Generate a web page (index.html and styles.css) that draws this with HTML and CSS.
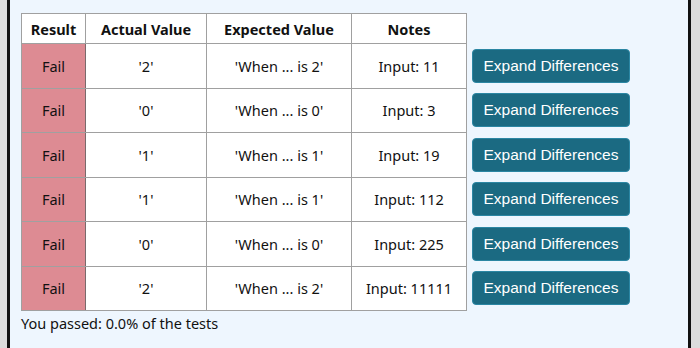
FILE: index.html
```html
<!DOCTYPE html>
<html>
<head>
<meta charset="utf-8">
<link rel="stylesheet" href="styles.css">
</head>
<body>
<div class="frame">
  <table class="results">
    <colgroup>
      <col class="c-result"><col class="c-actual"><col class="c-expected"><col class="c-notes"><col class="c-btn">
    </colgroup>
    <thead>
      <tr><th>Result</th><th>Actual Value</th><th>Expected Value</th><th>Notes</th><th class="btn-cell"></th></tr>
    </thead>
    <tbody>
      <tr><td class="fail">Fail</td><td>'2'</td><td>'When ... is 2'</td><td>Input: 11</td><td class="btn-cell"><button class="btn">Expand Differences</button></td></tr>
      <tr><td class="fail">Fail</td><td>'0'</td><td>'When ... is 0'</td><td>Input: 3</td><td class="btn-cell"><button class="btn">Expand Differences</button></td></tr>
      <tr><td class="fail">Fail</td><td>'1'</td><td>'When ... is 1'</td><td>Input: 19</td><td class="btn-cell"><button class="btn">Expand Differences</button></td></tr>
      <tr><td class="fail">Fail</td><td>'1'</td><td>'When ... is 1'</td><td>Input: 112</td><td class="btn-cell"><button class="btn">Expand Differences</button></td></tr>
      <tr><td class="fail">Fail</td><td>'0'</td><td>'When ... is 0'</td><td>Input: 225</td><td class="btn-cell"><button class="btn">Expand Differences</button></td></tr>
      <tr><td class="fail">Fail</td><td>'2'</td><td>'When ... is 2'</td><td>Input: 11111</td><td class="btn-cell"><button class="btn">Expand Differences</button></td></tr>
    </tbody>
  </table>
  <p class="summary">You passed: 0.0% of the tests</p>
</div>
</body>
</html>
```
FILE: styles.css
```css
html, body {
  margin: 0;
  padding: 0;
  background: #dcdcdc;
  height: 100%;
}
.frame {
  margin-left: 7px;
  height: 348px;
  width: 684px;
  box-sizing: border-box;
  border-left: 3px solid #111;
  border-right: 3px solid #111;
  background: #eef6fe;
  padding: 13px 0 0 11px;
  font-family: "Noto Sans", "Open Sans", sans-serif;
  color: #111;
}
.results {
  border-collapse: collapse;
  table-layout: fixed;
  font-size: 14.5px;
}
.c-result { width: 64px; }
.c-actual { width: 121px; }
.c-expected { width: 145px; }
.c-notes { width: 115px; }
.c-btn { width: 170px; }
.results th,
.results td {
  border: 1px solid #a0a0a0;
  background: #fff;
  text-align: center;
  padding: 0;
}
.results th {
  height: 29px;
  font-weight: 700;
}
.results td {
  height: 43.5px;
}
.results td.fail {
  background: #dd8b93;
  border-right-color: #7a6a6c;
}
.results .btn-cell {
  border: none;
  background: transparent;
  text-align: left;
  padding-left: 5px;
}
.btn {
  font-family: "Liberation Sans", Arial, sans-serif;
  font-size: 15.5px;
  color: #fff;
  background: #1b6a82;
  border: 1px solid #2b86a3;
  border-radius: 4px;
  height: 34px;
  width: 158px;
  padding: 0;
  line-height: 32px;
}
.summary {
  margin: 2px 0 0 0;
  font-size: 14.5px;
}
```
